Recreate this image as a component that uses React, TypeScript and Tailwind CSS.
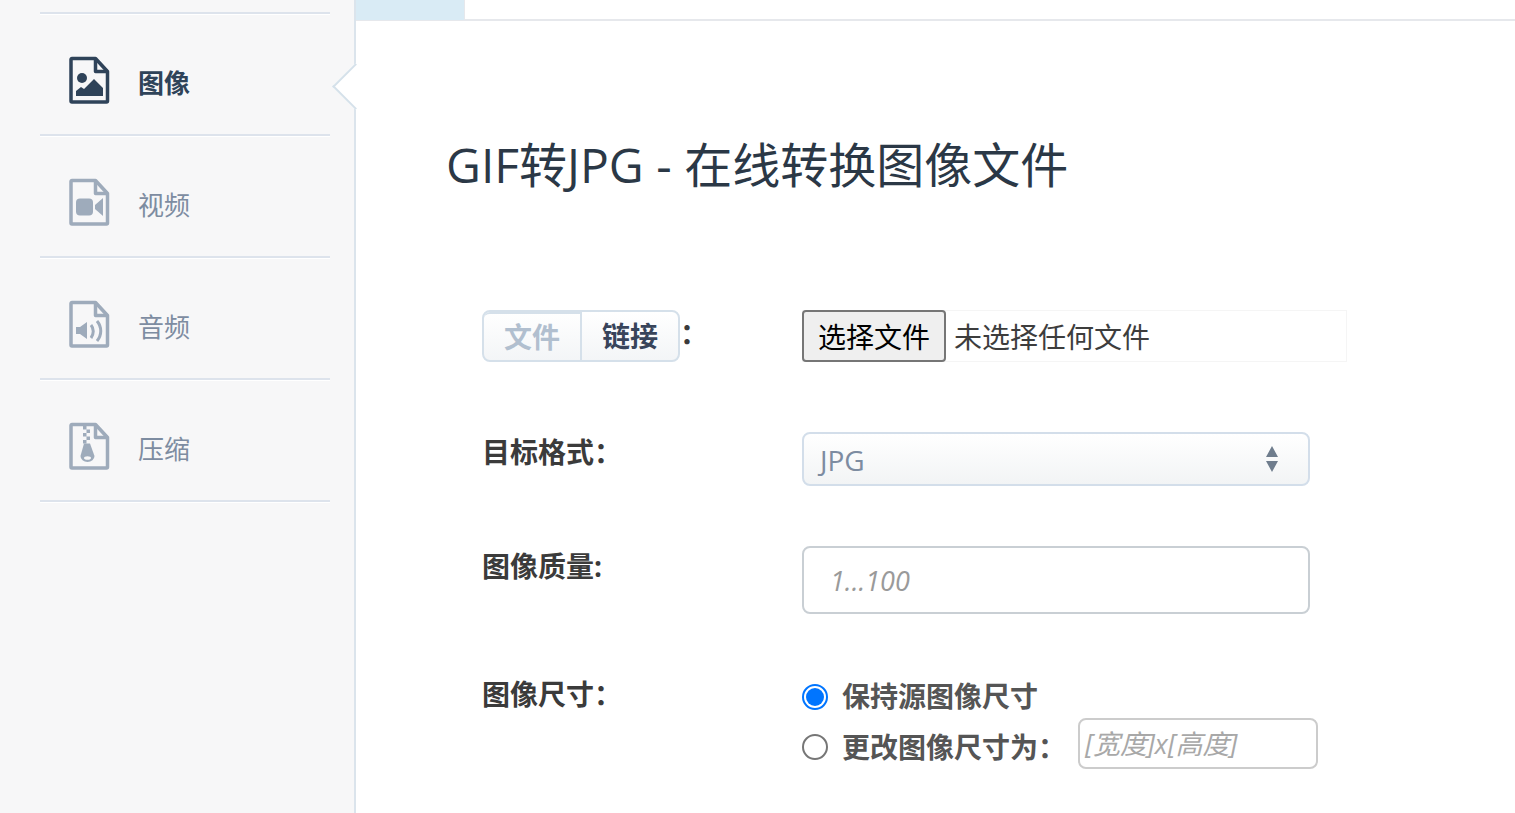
const cjk = "font-['Open_Sans','Noto_Sans_CJK_SC',sans-serif]";

function FileIcon({ color, children }: { color: string; children: React.ReactNode }) {
  return (
    <svg width="42" height="48" viewBox="0 0 42 48" className="shrink-0">
      <path d="M3 2.5h23.500l12 13V45a1 1 0 0 1-1 1H3a1 1 0 0 1-1-1V3.500a1 1 0 0 1 1-1z" fill="none" stroke={color} strokeWidth="3.5" strokeLinejoin="round" />
      <path d="M26.500 3v12.500h12" fill="none" stroke={color} strokeWidth="3.5" strokeLinejoin="round" />
      {children}
    </svg>
  );
}

const dark = "#2f4359";
const muted = "#9eabbb";

function NavRow({ label, active, icon }: { label: string; active?: boolean; icon: React.ReactNode }) {
  return (
    <div className="relative h-[122px] ml-[40px] w-[290px] border-b-2 border-[#dde3ec] shadow-[0_1px_0_#ffffff] flex items-center pt-[12px] pl-[29px] gap-[27px]">
      {icon}
      <span className={active ? "mt-[6px] text-[26px] font-bold text-[#2f4359] leading-none" : "mt-[6px] text-[26px] text-[#7d8ca1] leading-none"}>{label}</span>
    </div>
  );
}

export default function App() {
  return (
    <div className={`flex h-[813px] w-[1515px] overflow-hidden bg-white ${cjk}`}>
      <aside className="relative w-[356px] shrink-0 bg-[#f7f7f8] border-r-2 border-[#dbe4ec] pt-[12px]">
        <div className="ml-[40px] w-[290px] h-[2px] bg-[#dde3ec] shadow-[0_1px_0_#ffffff]" />
        <NavRow
          label="图像"
          active
          icon={
            <FileIcon color={dark}>
              <circle cx="13" cy="22" r="5" fill={dark} />
              <path d="M7 40v-5l5-4 3 2 10-10 9 9v8z" fill={dark} />
            </FileIcon>
          }
        />
        <NavRow
          label="视频"
          icon={
            <FileIcon color={muted}>
              <rect x="7" y="20.500" width="17" height="17" rx="4" fill={muted} />
              <path d="M34 20v18l-8-7v-4z" fill={muted} />
            </FileIcon>
          }
        />
        <NavRow
          label="音频"
          icon={
            <FileIcon color={muted}>
              <path d="M7 27h4l7-5v17l-7-5H7z" fill={muted} />
              <path d="M22 25c3 3.500 3 9 0 13M28 21c5 6 5 14 0 20" fill="none" stroke={muted} strokeWidth="3" />
            </FileIcon>
          }
        />
        <NavRow
          label="压缩"
          icon={
            <FileIcon color={muted}>
              <path d="M14 4h3.500v3.500h-3.500zM17.500 7.500h3.500v3.500h-3.500zM14 11h3.500v3.500h-3.500zM17.500 14.500h3.500v3.500h-3.500zM14 18h3.500v3.500h-3.500z" fill={muted} />
              <path d="M15 21.500h6l4.500 12.500a7 6 0 1 1-14 0z" fill={muted} />
              <ellipse cx="18.500" cy="36" rx="3.500" ry="1.800" fill="#f7f7f8" />
            </FileIcon>
          }
        />
        <div className="absolute right-[-18px] top-[70px] h-[33px] w-[33px] rotate-45 bg-white border-l-2 border-b-2 border-[#d5e1ea]" />
      </aside>

      <main className="flex-1 min-w-0">
        <div className="h-[21px] border-b-2 border-[#e6e8ec]">
          <div className="h-[20px] w-[109px] bg-[#d9ebf5] border-r border-[#e6e8ec]" />
        </div>
        <div className="pl-[90px]">
          <h1 className="mt-[113px] text-[48px] leading-[62px] font-normal text-[#2b3846] whitespace-nowrap">GIF转JPG - 在线转换图像文件</h1>

          <div className="mt-[114px] pl-[36px] flex">
            <div className="w-[320px] flex items-start text-[#3b3b3b] font-bold">
              <div className="flex h-[52px] w-[198px] rounded-[8px] border-2 border-[#d5e0ea] bg-gradient-to-b from-white to-[#f3f5f7] text-[28px] leading-[44px]">
                <span className="w-[98px] flex items-center justify-center text-[#b1bfcf] border-r-2 border-[#d5e0ea] border-t-2 rounded-tl-[6px]">文件</span>
                <span className="flex-1 flex items-center justify-center text-[#38445a]">链接</span>
              </div>
              <span className="text-[28px] leading-[46px]">：</span>
            </div>
            <div className="flex w-[545px] h-[52px] border border-[#f5f5f5] items-stretch">
              <button className="w-[144px] -ml-[1px] -mt-[1px] h-[52px] rounded-[4px] border-2 border-[#767676] bg-[#efefef] pt-[1px] text-[28px] text-black">选择文件</button>
              <span className="ml-[8px] text-[28px] leading-[52px] text-[#3d3d3d]">未选择任何文件</span>
            </div>
          </div>

          <div className="mt-[70px] pl-[36px] flex">
            <label className="w-[320px] pt-[1px] text-[28px] leading-[38px] font-bold text-[#3b3b3b]">目标格式：</label>
            <div className="w-[508px] h-[54px] rounded-[8px] border-2 border-[#d3deea] bg-gradient-to-b from-white to-[#f2f4f5] flex items-center justify-between pl-[16px] pr-[29px]">
              <span className="pt-[2px] text-[28px] text-[#7d8ca1]">JPG</span>
              <svg width="14" height="26" viewBox="0 0 14 26"><path d="M7 0l6 11H1zM7 26L1 15h12z" fill="#6f7d8d" /></svg>
            </div>
          </div>

          <div className="mt-[60px] pl-[36px] flex">
            <label className="w-[320px] pt-[1px] text-[28px] leading-[38px] font-bold text-[#3b3b3b]">图像质量:</label>
            <div className="w-[508px] h-[68px] rounded-[8px] border-2 border-[#c9cfd4] flex items-center pl-[26px] pt-[2px] text-[27px] italic text-[#9a9a9a]">1...100</div>
          </div>

          <div className="mt-[60px] pl-[36px] flex">
            <label className="w-[320px] pt-[1px] text-[28px] leading-[38px] font-bold text-[#3b3b3b]">图像尺寸：</label>
            <div className="flex flex-col text-[#555] font-bold text-[28px]">
              <div className="flex items-center h-[44px] mt-[1px]">
                <span className="w-[26px] h-[26px] rounded-full border-2 border-[#0075ff] flex items-center justify-center"><span className="w-[18px] h-[18px] rounded-full bg-[#0075ff]" /></span>
                <span className="ml-[14px] -mt-[2px]">保持源图像尺寸</span>
              </div>
              <div className="flex items-center h-[52px] mt-[2px]">
                <span className="w-[26px] h-[26px] rounded-full border-2 border-[#767676]" />
                <span className="ml-[14px]">更改图像尺寸为：</span>
                <div className="ml-[12px] -mt-[7px] w-[240px] h-[51px] rounded-[8px] border-2 border-[#cccccc] flex items-center pl-[5px] pt-[2px] text-[27px] font-normal italic text-[#a8a8a8]">[宽度]x[高度]</div>
              </div>
            </div>
          </div>
        </div>
      </main>
    </div>
  );
}
